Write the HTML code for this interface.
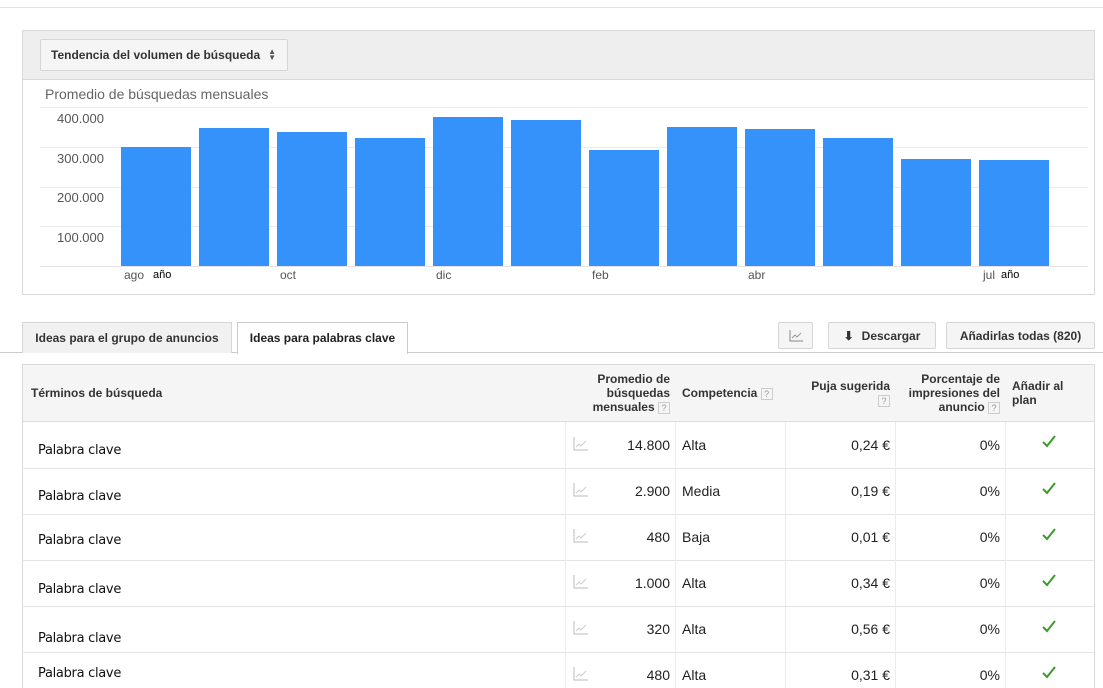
<!DOCTYPE html>
<html><head><meta charset="utf-8">
<style>
*{margin:0;padding:0;box-sizing:border-box}
html,body{width:1103px;height:688px;overflow:hidden}
body{background:#fff;font-family:"Liberation Sans",Arial,sans-serif;color:#222;position:relative}
.a{position:absolute}
.btn{position:absolute;background:#f5f5f5;border:1px solid #d6d6d6;border-radius:2px;font-size:12px;font-weight:bold;color:#333;display:flex;align-items:center;justify-content:center}
.gl{position:absolute;left:40px;width:1048px;height:1px;background:#ebebeb}
.yl{position:absolute;left:57px;font-size:13px;color:#555}
.bar{position:absolute;background:#3692fb;width:70px;bottom:422px}
.xl{position:absolute;top:268px;font-size:12px;color:#555}
.hl{position:absolute;left:22px;width:1072px;height:1px;background:#e5e5e5}
.vl{position:absolute;top:422px;height:266px;width:1px;background:#ececec}
.kw{position:absolute;left:38px;font-size:13px;font-family:"DejaVu Sans",sans-serif;color:#111;letter-spacing:-0.3px}
.c{position:absolute;font-size:14px;color:#222}
.r{text-align:right}
.q{display:inline-block;width:12px;height:12px;border:1px solid #ccc;font-size:9px;color:#999;text-align:center;line-height:10px;font-weight:normal;vertical-align:middle}
.th{position:absolute;font-size:12px;font-weight:bold;color:#333;line-height:14px}
</style></head><body>
<div class="a" style="left:0;top:7px;width:1103px;height:1px;background:#e0e0e0"></div>
<div class="a" style="left:22px;top:30px;width:1073px;height:265px;border:1px solid #d9d9d9;background:#fff"></div>
<div class="a" style="left:23px;top:31px;width:1071px;height:49px;background:#eee;border-bottom:1px solid #d9d9d9"></div>
<div class="btn" style="left:40px;top:39px;width:248px;height:32px;justify-content:flex-start;padding-left:10px">Tendencia del volumen de búsqueda <span style="margin-left:8px;font-size:8px;line-height:6px;display:inline-block;color:#555">▲<br>▼</span></div>
<div class="a" style="left:45px;top:86px;font-size:14px;color:#666">Promedio de búsquedas mensuales</div>
<div class="gl" style="top:107px"></div><div class="gl" style="top:147px"></div><div class="gl" style="top:187px"></div><div class="gl" style="top:226px"></div><div class="gl" style="top:266px;background:#e4e4e4"></div>
<div class="yl" style="top:111px">400.000</div><div class="yl" style="top:151px">300.000</div><div class="yl" style="top:190px">200.000</div><div class="yl" style="top:230px">100.000</div>
<div class="bar" style="left:121px;top:147px"></div>
<div class="bar" style="left:199px;top:128px"></div>
<div class="bar" style="left:277px;top:132px"></div>
<div class="bar" style="left:355px;top:138px"></div>
<div class="bar" style="left:433px;top:117px"></div>
<div class="bar" style="left:511px;top:120px"></div>
<div class="bar" style="left:589px;top:150px"></div>
<div class="bar" style="left:667px;top:127px"></div>
<div class="bar" style="left:745px;top:129px"></div>
<div class="bar" style="left:823px;top:138px"></div>
<div class="bar" style="left:901px;top:159px"></div>
<div class="bar" style="left:979px;top:160px"></div>
<div class="xl" style="left:124px">ago</div><div class="xl" style="left:153px;color:#000;font-size:11px;top:269px">año</div>
<div class="xl" style="left:280px">oct</div><div class="xl" style="left:436px">dic</div><div class="xl" style="left:592px">feb</div><div class="xl" style="left:748px">abr</div>
<div class="xl" style="left:983px">jul</div><div class="xl" style="left:1001px;color:#000;font-size:11px;top:269px">año</div>
<div class="a" style="left:0;top:352px;width:1103px;height:1px;background:#ccc"></div>
<div class="a" style="left:22px;top:322px;width:210px;height:31px;background:#f1f1f1;border:1px solid #d6d6d6;border-bottom:none;font-size:12px;font-weight:bold;color:#333;text-align:center;line-height:30px">Ideas para el grupo de anuncios</div>
<div class="a" style="left:237px;top:322px;width:171px;height:32px;background:#fff;border:1px solid #ccc;border-bottom:none;font-size:12px;font-weight:bold;color:#222;text-align:center;line-height:31px">Ideas para palabras clave</div>
<div class="btn" style="left:778px;top:322px;width:35px;height:27px"><svg width="14" height="12"><path d="M1 0V11H14" stroke="#888" fill="none"/><path d="M3 8L6 5L8 7L12 3" stroke="#999" fill="none"/></svg></div>
<div class="btn" style="left:828px;top:322px;width:108px;height:27px"><span style="font-size:12px;margin-right:8px">⬇</span>Descargar</div>
<div class="btn" style="left:946px;top:322px;width:149px;height:27px">Añadirlas todas (820)</div>
<div class="a" style="left:22px;top:364px;width:1073px;height:340px;border:1px solid #d9d9d9"></div>
<div class="a" style="left:23px;top:365px;width:1071px;height:57px;background:#f5f5f5;border-bottom:1px solid #ddd"></div>
<div class="th" style="left:31px;top:386px">Términos de búsqueda</div>
<div class="th r" style="left:570px;top:372px;width:100px">Promedio de<br>búsquedas<br>mensuales <span class="q">?</span></div>
<div class="th" style="left:682px;top:386px">Competencia <span class="q">?</span></div>
<div class="th r" style="left:790px;top:379px;width:100px">Puja sugerida<br><span class="q">?</span></div>
<div class="th r" style="left:895px;top:372px;width:105px">Porcentaje de<br>impresiones del<br>anuncio <span class="q">?</span></div>
<div class="th" style="left:1012px;top:379px">Añadir al<br>plan</div>
<div class="hl" style="top:468px"></div><div class="hl" style="top:514px"></div><div class="hl" style="top:560px"></div><div class="hl" style="top:606px"></div><div class="hl" style="top:652px"></div>
<div class="vl" style="left:565px"></div><div class="vl" style="left:675px"></div><div class="vl" style="left:785px"></div><div class="vl" style="left:895px"></div><div class="vl" style="left:1005px"></div>

<div class="kw" style="top:443px">Palabra clave</div>
<div class="kw" style="top:489px">Palabra clave</div>
<div class="kw" style="top:533px">Palabra clave</div>
<div class="kw" style="top:582px">Palabra clave</div>
<div class="kw" style="top:631px">Palabra clave</div>
<div class="kw" style="top:666px">Palabra clave</div>

<svg class="a" style="left:573px;top:437px" width="16" height="14"><path d="M1 0V13H15" stroke="#bbb" fill="none"/><path d="M3 10L6 7L8 9L13 4" stroke="#ccc" fill="none"/></svg>
<svg class="a" style="left:573px;top:483px" width="16" height="14"><path d="M1 0V13H15" stroke="#bbb" fill="none"/><path d="M3 10L6 7L8 9L13 4" stroke="#ccc" fill="none"/></svg>
<svg class="a" style="left:573px;top:529px" width="16" height="14"><path d="M1 0V13H15" stroke="#bbb" fill="none"/><path d="M3 10L6 7L8 9L13 4" stroke="#ccc" fill="none"/></svg>
<svg class="a" style="left:573px;top:575px" width="16" height="14"><path d="M1 0V13H15" stroke="#bbb" fill="none"/><path d="M3 10L6 7L8 9L13 4" stroke="#ccc" fill="none"/></svg>
<svg class="a" style="left:573px;top:621px" width="16" height="14"><path d="M1 0V13H15" stroke="#bbb" fill="none"/><path d="M3 10L6 7L8 9L13 4" stroke="#ccc" fill="none"/></svg>
<svg class="a" style="left:573px;top:667px" width="16" height="14"><path d="M1 0V13H15" stroke="#bbb" fill="none"/><path d="M3 10L6 7L8 9L13 4" stroke="#ccc" fill="none"/></svg>

<div class="c r" style="left:600px;width:70px;top:437px">14.800</div>
<div class="c r" style="left:600px;width:70px;top:483px">2.900</div>
<div class="c r" style="left:600px;width:70px;top:529px">480</div>
<div class="c r" style="left:600px;width:70px;top:575px">1.000</div>
<div class="c r" style="left:600px;width:70px;top:621px">320</div>
<div class="c r" style="left:600px;width:70px;top:667px">480</div>

<div class="c" style="left:682px;top:437px">Alta</div>
<div class="c" style="left:682px;top:483px">Media</div>
<div class="c" style="left:682px;top:529px">Baja</div>
<div class="c" style="left:682px;top:575px">Alta</div>
<div class="c" style="left:682px;top:621px">Alta</div>
<div class="c" style="left:682px;top:667px">Alta</div>

<div class="c r" style="left:790px;width:100px;top:437px">0,24 €</div>
<div class="c r" style="left:790px;width:100px;top:483px">0,19 €</div>
<div class="c r" style="left:790px;width:100px;top:529px">0,01 €</div>
<div class="c r" style="left:790px;width:100px;top:575px">0,34 €</div>
<div class="c r" style="left:790px;width:100px;top:621px">0,56 €</div>
<div class="c r" style="left:790px;width:100px;top:667px">0,31 €</div>

<div class="c r" style="left:900px;width:100px;top:437px">0%</div>
<div class="c r" style="left:900px;width:100px;top:483px">0%</div>
<div class="c r" style="left:900px;width:100px;top:529px">0%</div>
<div class="c r" style="left:900px;width:100px;top:575px">0%</div>
<div class="c r" style="left:900px;width:100px;top:621px">0%</div>
<div class="c r" style="left:900px;width:100px;top:667px">0%</div>

<svg class="a" style="left:1041px;top:434px" width="16" height="14"><path d="M2 8L6 12L14 2" stroke="#3a9b2a" stroke-width="2" fill="none"/></svg>
<svg class="a" style="left:1041px;top:481px" width="16" height="14"><path d="M2 8L6 12L14 2" stroke="#3a9b2a" stroke-width="2" fill="none"/></svg>
<svg class="a" style="left:1041px;top:527px" width="16" height="14"><path d="M2 8L6 12L14 2" stroke="#3a9b2a" stroke-width="2" fill="none"/></svg>
<svg class="a" style="left:1041px;top:573px" width="16" height="14"><path d="M2 8L6 12L14 2" stroke="#3a9b2a" stroke-width="2" fill="none"/></svg>
<svg class="a" style="left:1041px;top:619px" width="16" height="14"><path d="M2 8L6 12L14 2" stroke="#3a9b2a" stroke-width="2" fill="none"/></svg>
<svg class="a" style="left:1041px;top:665px" width="16" height="14"><path d="M2 8L6 12L14 2" stroke="#3a9b2a" stroke-width="2" fill="none"/></svg>
</body></html>
